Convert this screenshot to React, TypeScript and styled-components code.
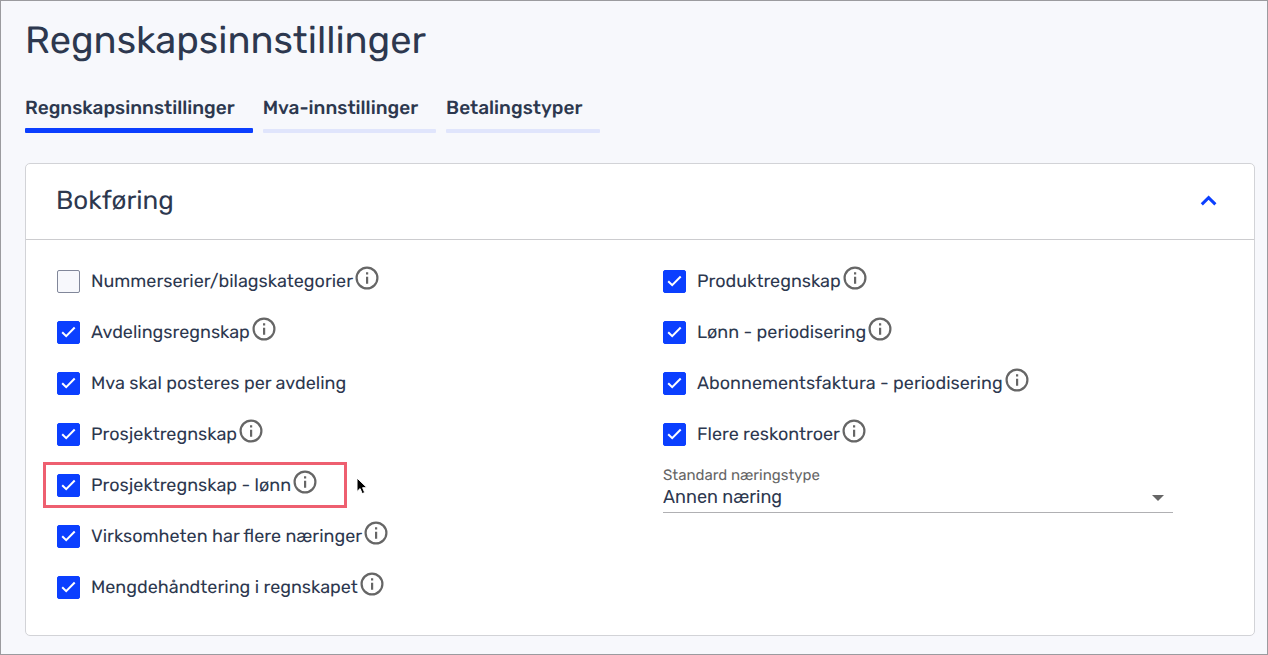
import React, { useState } from "react";
import styled, { createGlobalStyle } from "styled-components";

const color = {
  ink: "#2d384f",
  blue: "#0b3fff",
  pale: "#e0e5fc",
  page: "#f7f8fc",
  line: "#d2d3d7",
  grey: "#666666",
  mark: "#ee5f70",
};

const GlobalStyle = createGlobalStyle`
  *, *::before, *::after { box-sizing: border-box; }
  body {
    margin: 0;
    background: ${color.page};
    color: ${color.ink};
    font-family: Rubik, Roboto, "Liberation Sans", sans-serif;
    text-rendering: geometricPrecision;
  }
`;

const Page = styled.main`
  min-height: 100vh;
  padding: 15px 12px 18px 24px;
  border: 1px solid #9b9b9f;
`;

const Title = styled.h1`
  margin: 0;
  font-size: 38px;
  line-height: 48px;
  font-weight: 400;
`;

const Tabs = styled.nav`
  display: flex;
  gap: 10px;
  height: 39px;
  margin: 30px 0;
`;

const Tab = styled.a<{ $active?: boolean }>`
  display: flex;
  flex-direction: column;
  justify-content: space-between;
  padding-right: 18px;
  color: inherit;
  font-size: 19px;
  line-height: 28px;
  font-weight: 500;
  text-decoration: none;

  &::after {
    content: "";
    height: ${(p) => (p.$active ? 5 : 4)}px;
    margin-right: -18px;
    border-radius: 1px;
    background: ${(p) => (p.$active ? color.blue : color.pale)};
  }
`;

const Card = styled.section`
  border: 1px solid ${color.line};
  border-radius: 5px;
  background: #fff;
`;

const CardHeader = styled.header`
  display: flex;
  align-items: center;
  justify-content: space-between;
  height: 76px;
  padding: 0 33px 2px 30px;
  border-bottom: 1px solid #cccccf;
`;

const CardTitle = styled.h2`
  margin: 0;
  font-size: 26px;
  line-height: 32px;
  font-weight: 400;
`;

const Toggle = styled.button`
  display: flex;
  padding: 0;
  border: 0;
  background: none;
  color: ${color.blue};
  cursor: pointer;
`;

const Options = styled.div`
  display: grid;
  grid-template-columns: 1fr 1fr;
  gap: 96px;
  padding: 16px 81px 22px 31px;
`;

const Column = styled.div`
  display: flex;
  flex-direction: column;
  align-items: flex-start;
`;

const Option = styled.div<{ $marked?: boolean }>`
  display: flex;
  align-items: center;
  height: 51px;
  position: relative;

  &::after {
    content: "";
    display: ${(p) => (p.$marked ? "block" : "none")};
    position: absolute;
    inset: 2px -30px 3px -14px;
    border: 3px solid ${color.mark};
    pointer-events: none;
  }
`;

const OptionLabel = styled.label`
  display: flex;
  align-items: flex-start;
  gap: 11px;
  font-size: 18px;
  line-height: 23px;
  white-space: nowrap;
  cursor: pointer;
`;

const Box = styled.span`
  display: grid;
  width: 23px;
  height: 23px;

  & > * { grid-area: 1 / 1; }
`;

const Tick = styled.input`
  appearance: none;
  width: 23px;
  height: 23px;
  margin: 0;
  border: 1px solid #81879a;
  border-radius: 2px;
  background: ${color.page};

  &:checked {
    border-color: ${color.blue};
    background: ${color.blue};
  }

  & + svg { visibility: hidden; pointer-events: none; }
  &:checked + svg { visibility: visible; }
`;

const InfoButton = styled.button`
  display: flex;
  margin: 0 0 8px 2px;
  padding: 0;
  border: 0;
  background: none;
  color: ${color.grey};
  cursor: help;
`;

const Pointer = styled.svg`
  position: absolute;
  left: 100%;
  top: 17px;
  margin-left: 39px;
`;

const Field = styled.div`
  display: flex;
  flex-direction: column;
  position: relative;
  width: 100%;
  margin-top: 5px;
  color: ${color.grey};
`;

const FieldLabel = styled.label`
  font-size: 15px;
  line-height: 20px;
`;

const Select = styled.select`
  appearance: none;
  height: 28px;
  padding: 0 32px 3px 0;
  border: 0;
  border-bottom: 1px solid #b0b0b3;
  border-radius: 0;
  background: none;
  color: ${color.ink};
  font-family: inherit;
  font-size: 18px;
  line-height: 24px;
`;

const Arrow = styled.svg`
  position: absolute;
  right: 9px;
  bottom: 12px;
  pointer-events: none;
`;

const InfoIcon = () => (
  <svg width="24" height="24" viewBox="0 0 24 24" fill="none" aria-hidden="true">
    <circle cx="12" cy="12" r="10.4" stroke="currentColor" strokeWidth="2.2" />
    <path d="M11 6.3h2.2v2.2H11zM11 10.7h2.2v7H11z" fill="currentColor" />
  </svg>
);

interface Item {
  id: string;
  text: string;
  info?: boolean;
  off?: boolean;
  marked?: boolean;
}

const left: Item[] = [
  { id: "series", text: "Nummerserier/bilagskategorier", info: true, off: true },
  { id: "department", text: "Avdelingsregnskap", info: true },
  { id: "vat", text: "Mva skal posteres per avdeling" },
  { id: "project", text: "Prosjektregnskap", info: true },
  { id: "project-pay", text: "Prosjektregnskap - lønn", info: true, marked: true },
  { id: "industries", text: "Virksomheten har flere næringer", info: true },
  { id: "quantity", text: "Mengdehåndtering i regnskapet", info: true },
];

const right: Item[] = [
  { id: "product", text: "Produktregnskap", info: true },
  { id: "pay", text: "Lønn - periodisering", info: true },
  { id: "subscription", text: "Abonnementsfaktura - periodisering", info: true },
  { id: "ledgers", text: "Flere reskontroer", info: true },
];

const OptionRow = ({ item }: { item: Item }) => (
  <Option $marked={item.marked}>
    <OptionLabel htmlFor={item.id}>
      <Box>
        <Tick id={item.id} type="checkbox" defaultChecked={!item.off} />
        <svg width="23" height="23" viewBox="0 0 23 23" fill="none" aria-hidden="true">
          <path d="M5.2 11.2l4 4L17.7 6.5" stroke="#fff" strokeWidth="2" />
        </svg>
      </Box>
      {item.text}
    </OptionLabel>
    {item.info && (
      <InfoButton type="button" aria-label={"Info: " + item.text}>
        <InfoIcon />
      </InfoButton>
    )}
    {item.marked && (
      <Pointer width="13" height="19" viewBox="0 0 13 19" aria-hidden="true">
        <path
          d="M1 1v13.5l3.1-2.9 2.1 5 2.5-1-2.1-4.9H11z"
          fill="#000"
          stroke="#fff"
          strokeWidth="1"
        />
      </Pointer>
    )}
  </Option>
);

export default function App() {
  const [open, setOpen] = useState(true);
  return (
    <>
      <GlobalStyle />
      <Page>
        <Title>Regnskapsinnstillinger</Title>
        <Tabs>
          <Tab href="#regnskap" $active aria-current="page">Regnskapsinnstillinger</Tab>
          <Tab href="#mva">Mva-innstillinger</Tab>
          <Tab href="#betaling">Betalingstyper</Tab>
        </Tabs>
        <Card>
          <CardHeader>
            <CardTitle>Bokføring</CardTitle>
            <Toggle
              type="button"
              aria-label="Bokføring"
              aria-expanded={open}
              onClick={() => setOpen(!open)}
            >
              <svg width="24" height="24" viewBox="0 0 24 24" fill="none" aria-hidden="true">
                <path d="M4.8 15.4L11.6 8.6l6.8 6.8" stroke="currentColor" strokeWidth="3" />
              </svg>
            </Toggle>
          </CardHeader>
          {open && (
            <Options>
              <Column>
                {left.map((item) => <OptionRow key={item.id} item={item} />)}
              </Column>
              <Column>
                {right.map((item) => <OptionRow key={item.id} item={item} />)}
                <Field>
                  <FieldLabel htmlFor="industry">Standard næringstype</FieldLabel>
                  <Select id="industry">
                    <option>Annen næring</option>
                  </Select>
                  <Arrow width="12" height="6" viewBox="0 0 12 6" aria-hidden="true">
                    <path d="M0 0h12L6 6z" fill={color.grey} />
                  </Arrow>
                </Field>
              </Column>
            </Options>
          )}
        </Card>
      </Page>
    </>
  );
}
